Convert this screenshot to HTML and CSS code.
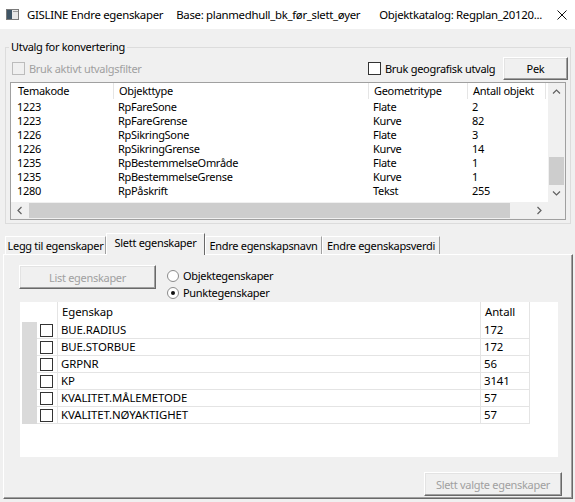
FILE: index.html
```html
<!DOCTYPE html>
<html>
<head>
<meta charset="utf-8">
<title>GISLINE Endre egenskaper</title>
<link rel="stylesheet" href="styles.css">
</head>
<body>
<div class="titlebar">
  <svg class="appicon" viewBox="0 0 13 11" width="13" height="11">
    <rect x="0.5" y="0.5" width="12" height="10" fill="#e8e8e8" stroke="#7a7a7a"/>
    <rect x="1" y="1" width="5" height="9" fill="#3f5566"/>
    <rect x="7" y="2" width="5" height="1" fill="#9a9a9a"/>
  </svg>
  <span class="title">GISLINE Endre egenskaper</span>
  <span class="title t2">Base: planmedhull_bk_før_slett_øyer</span>
  <span class="title t3">Objektkatalog: Regplan_20120...</span>
  <svg class="close" viewBox="0 0 10 10" width="10" height="10">
    <path d="M0.5 0.5 L9.5 9.5 M9.5 0.5 L0.5 9.5" stroke="#111" stroke-width="1"/>
  </svg>
</div>

<fieldset class="group">
  <legend>Utvalg for konvertering</legend>
  <div class="filterrow">
    <div class="check disabled"><span class="box"></span>Bruk aktivt utvalgsfilter</div>
    <div class="check geo"><span class="box"></span>Bruk geografisk utvalg</div>
    <div class="btn pek">Pek</div>
  </div>
  <div class="listview">
    <div class="lv-main">
      <div class="lv-row lv-head">
        <div class="c1">Temakode</div><div>Objekttype</div><div>Geometritype</div><div>Antall objekt</div>
      </div>
      <div class="lv-body">
        <div class="lv-row"><div class="c1">1223</div><div>RpFareSone</div><div>Flate</div><div>2</div></div>
        <div class="lv-row"><div class="c1">1223</div><div>RpFareGrense</div><div>Kurve</div><div>82</div></div>
        <div class="lv-row"><div class="c1">1226</div><div>RpSikringSone</div><div>Flate</div><div>3</div></div>
        <div class="lv-row"><div class="c1">1226</div><div>RpSikringGrense</div><div>Kurve</div><div>14</div></div>
        <div class="lv-row"><div class="c1">1235</div><div>RpBestemmelseOmråde</div><div>Flate</div><div>1</div></div>
        <div class="lv-row"><div class="c1">1235</div><div>RpBestemmelseGrense</div><div>Kurve</div><div>1</div></div>
        <div class="lv-row"><div class="c1">1280</div><div>RpPåskrift</div><div>Tekst</div><div>255</div></div>
      </div>
    </div>
    <div class="vscroll">
      <div class="sbtn"><svg viewBox="0 0 9 5" width="9" height="5"><path d="M1 4.5 L4.5 1 L8 4.5" fill="none" stroke="#606060" stroke-width="1.2"/></svg></div>
      <div class="vtrack"><div class="vthumb"></div></div>
      <div class="sbtn"><svg viewBox="0 0 9 5" width="9" height="5"><path d="M1 0.5 L4.5 4 L8 0.5" fill="none" stroke="#606060" stroke-width="1.2"/></svg></div>
    </div>
    <div class="hscroll">
      <div class="sbtn"><svg viewBox="0 0 5 9" width="5" height="9"><path d="M4.5 1 L1 4.5 L4.5 8" fill="none" stroke="#606060" stroke-width="1.2"/></svg></div>
      <div class="htrack"><div class="hthumb"></div></div>
      <div class="sbtn"><svg viewBox="0 0 5 9" width="5" height="9"><path d="M0.5 1 L4 4.5 L0.5 8" fill="none" stroke="#606060" stroke-width="1.2"/></svg></div>
    </div>
    <div class="corner"></div>
  </div>
</fieldset>

<div class="tabs">
  <div class="tab tab1">Legg til egenskaper</div>
  <div class="tab tab2 active">Slett egenskaper</div>
  <div class="tab tab3">Endre egenskapsnavn</div>
  <div class="tab tab4">Endre egenskapsverdi</div>
</div>
<div class="panel">
  <div class="toprow">
    <div class="btn disabled list">List egenskaper</div>
    <div class="radios">
      <div class="radio"><svg viewBox="0 0 12 12" width="12" height="12"><circle cx="6" cy="6" r="5.5" fill="#fff" stroke="#8a8a8a"/></svg>Objektegenskaper</div>
      <div class="radio"><svg viewBox="0 0 12 12" width="12" height="12"><circle cx="6" cy="6" r="5.5" fill="#fff" stroke="#8a8a8a"/><circle cx="6" cy="6" r="2" fill="#111"/></svg>Punktegenskaper</div>
    </div>
  </div>
  <div class="grid">
    <div class="g-row g-head">
      <div class="g-rh"></div><div class="g-chk"></div><div class="g-name">Egenskap</div><div class="g-cnt">Antall</div>
    </div>
    <div class="g-row"><div class="g-rh gray"></div><div class="g-chk"><span class="box"></span></div><div class="g-name">BUE.RADIUS</div><div class="g-cnt">172</div></div>
    <div class="g-row"><div class="g-rh gray"></div><div class="g-chk"><span class="box"></span></div><div class="g-name">BUE.STORBUE</div><div class="g-cnt">172</div></div>
    <div class="g-row"><div class="g-rh gray"></div><div class="g-chk"><span class="box"></span></div><div class="g-name">GRPNR</div><div class="g-cnt">56</div></div>
    <div class="g-row"><div class="g-rh gray"></div><div class="g-chk"><span class="box"></span></div><div class="g-name">KP</div><div class="g-cnt">3141</div></div>
    <div class="g-row"><div class="g-rh gray"></div><div class="g-chk"><span class="box"></span></div><div class="g-name">KVALITET.MÅLEMETODE</div><div class="g-cnt">57</div></div>
    <div class="g-row"><div class="g-rh gray"></div><div class="g-chk"><span class="box"></span></div><div class="g-name">KVALITET.NØYAKTIGHET</div><div class="g-cnt">57</div></div>
  </div>
  <div class="bottomrow">
    <div class="btn disabled slett">Slett valgte egenskaper</div>
  </div>
</div>
</body>
</html>
```

FILE: styles.css
```css
* { box-sizing: border-box; }
html, body { margin: 0; padding: 0; }
body {
  width: 575px;
  height: 502px;
  overflow: hidden;
  background: #f0f0f0;
  font-family: "Noto Sans", "DejaVu Sans", sans-serif;
  font-size: 11px;
  letter-spacing: -0.3px;
  color: #000;
}

/* title bar */
.titlebar {
  height: 29px;
  background: #fff;
  display: flex;
  align-items: center;
  padding-left: 6px;
  white-space: nowrap;
}
.appicon { margin-right: 8px; flex: none; }
.title { font-size: 11.4px; }
.t2 { margin-left: 13px; }
.t3 { margin-left: 19px; }
.close { margin-left: auto; margin-right: 8px; flex: none; }

/* group box */
.group {
  margin: 10px 4px 0 5px;
  border: 1px solid #dcdcdc;
  padding: 2px 4px 3px 4px;
  min-width: 0;
}
.group legend {
  padding: 0 2px;
  margin-left: -1px;
  line-height: 16px;
  height: 16px;
}
.filterrow {
  display: flex;
  align-items: center;
  height: 23px;
}
.check {
  display: flex;
  align-items: center;
  white-space: nowrap;
}
.box {
  display: inline-block;
  width: 13px;
  height: 13px;
  border: 1px solid #333;
  background: #fff;
  flex: none;
}
.check .box { margin-right: 4px; }
.check.disabled { color: #a0a0a0; margin-left: 2px; }
.check.disabled .box { border-color: #bcbcbc; background: #f0f0f0; }
.check.geo { margin-left: auto; width: 123px; margin-right: 12px; }

.btn {
  display: flex;
  align-items: center;
  justify-content: center;
  border: 1px solid;
  border-color: #ffffff #696969 #696969 #ffffff;
  box-shadow: inset -1px -1px 0 #a0a0a0, inset 1px 1px 0 #e3e3e3;
  background: #f0f0f0;
  white-space: nowrap;
}
.btn.pek { width: 65px; height: 23px; margin-right: -2px; }
.btn.disabled { color: #a0a0a0; }

/* list view */
.listview {
  margin-top: 2px;
  height: 138px;
  border: 1px solid #a0a0a0;
  background: #fff;
  display: grid;
  grid-template-columns: 1fr 17px;
  grid-template-rows: 1fr 17px;
}
.lv-main { overflow: hidden; }
.lv-row {
  display: grid;
  grid-template-columns: 103px 255px 99px 78px;
  height: 14px;
  line-height: 14px;
  white-space: nowrap;
}
.lv-row > div { padding-left: 4px; overflow: hidden; }
.lv-row > .c1 { padding-left: 6px; }
.lv-head { height: 16px; line-height: 16px; }
.lv-head > div { border-right: 1px solid #e5e5e5; padding-left: 5px; }
.lv-head > .c1 { padding-left: 7px; }
.lv-body { padding-top: 1px; }

.vscroll, .hscroll, .corner { background: #f0f0f0; }
.vscroll { display: flex; flex-direction: column; }
.hscroll { display: flex; }
.sbtn {
  width: 17px;
  height: 17px;
  display: flex;
  align-items: center;
  justify-content: center;
  flex: none;
}
.vtrack { flex: 1; display: flex; flex-direction: column; justify-content: flex-end; }
.vthumb { height: 28px; margin: 0 1px; background: #cdcdcd; }
.htrack { flex: 1; display: flex; align-items: stretch; padding: 1px 0; }
.hthumb { width: 481px; margin-left: 1px; background: #cdcdcd; }

/* tabs */
.tabs {
  margin-top: 9px;
  height: 21px;
  display: flex;
  align-items: flex-end;
  padding-left: 5px;
}
.tab {
  height: 18px;
  display: flex;
  align-items: center;
  justify-content: center;
  border-top: 1px solid #fff;
  border-left: 1px solid #fff;
  border-right: 1px solid #a0a0a0;
  white-space: nowrap;
  padding-bottom: 1px;
}
.tab1 { width: 101px; }
.tab2 { width: 99px; }
.tab3 { width: 117px; }
.tab4 { width: 118px; }
.tab.active {
  height: 22px;
  margin-bottom: -1px;
  position: relative;
  z-index: 1;
  background: #f0f0f0;
  border-right-color: #696969;
  padding-bottom: 4px;
}

.panel {
  margin: 0 2px 0 3px;
  height: 245px;
  border: 1px solid;
  border-color: #ffffff #696969 #696969 #ffffff;
  box-shadow: inset -1px -1px 0 #a0a0a0;
  padding: 10px 0 0 15px;
}
.toprow { display: flex; height: 37px; }
.btn.list { width: 137px; height: 24px; }
.radios { margin-left: 11px; margin-top: 2px; }
.radio {
  display: flex;
  align-items: center;
  height: 17px;
  white-space: nowrap;
}
.radio svg { margin-right: 4px; flex: none; }

/* data grid */
.grid {
  margin-left: 1px;
  width: 538px;
  height: 155px;
  background: #fff;
  font-size: 11.4px;
  letter-spacing: -0.1px;
}
.g-row {
  display: grid;
  grid-template-columns: 17px 21px 423px 49px;
  height: 17px;
  line-height: 16px;
  white-space: nowrap;
}
.g-row.g-head { height: 20px; line-height: 20px; }
.g-row > div { border-right: 1px solid #e4e4e4; border-bottom: 1px solid #e4e4e4; }
.g-row > .g-rh { border: 0; }
.g-head > div { border-bottom: 0; }
.g-head > .g-chk { border-right: 1px solid #e4e4e4; }
.g-rh.gray { background: #dadada; margin-left: 2px; }
.g-chk { display: flex; align-items: center; padding-left: 3px; }
.g-name { padding-left: 3px; }
.g-cnt { padding-left: 3px; }
.g-head .g-name, .g-head .g-cnt { padding-left: 4px; }

.bottomrow {
  display: flex;
  justify-content: flex-end;
  margin-top: 15px;
  padding-right: 10px;
}
.btn.slett { width: 138px; height: 24px; }
```
